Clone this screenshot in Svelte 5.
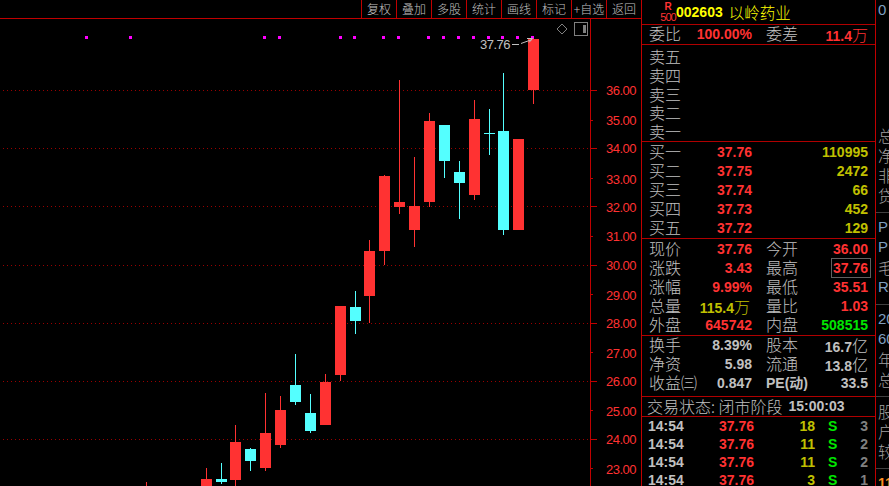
<script>
    const tools = ['复权', '叠加', '多股', '统计', '画线', '标记', '+自选', '返回'];

    const markers = [86, 130, 264, 279, 340, 354, 383, 398, 428, 443, 458, 473, 488, 502, 517, 532];
    const gridY = [90, 148, 206, 265, 323, 381, 439];
    const minorY = [120, 178, 236, 294, 352, 410, 468];
    const axis = [
        ['36.00', 90], ['35.00', 120], ['34.00', 148], ['33.00', 179], ['32.00', 207],
        ['31.00', 236], ['30.00', 265], ['29.00', 295], ['28.00', 323], ['27.00', 353],
        ['26.00', 381], ['25.00', 411], ['24.00', 439], ['23.00', 469]
    ];

    // x, up?, body top, body bottom, wick top, wick bottom
    const candles = [
        [141, true, 490, 490, 482, 490],
        [201, true, 479, 490, 468, 490],
        [216, false, 479, 482, 463, 484],
        [230, true, 442, 480, 425, 490],
        [245, false, 449, 461, 448, 471],
        [260, true, 433, 468, 393, 471],
        [275, true, 410, 445, 396, 448],
        [290, false, 385, 402, 354, 405],
        [305, false, 413, 431, 394, 433],
        [320, true, 382, 425, 374, 425],
        [335, true, 306, 375, 306, 381],
        [350, false, 307, 321, 291, 334],
        [364, true, 251, 296, 240, 323],
        [379, true, 176, 251, 175, 265],
        [394, true, 202, 207, 80, 214],
        [409, true, 206, 230, 157, 247],
        [424, true, 121, 202, 113, 207],
        [439, false, 125, 161, 125, 178],
        [454, false, 172, 183, 161, 219],
        [469, true, 119, 195, 100, 200],
        [484, false, 133, 134, 109, 155],
        [498, false, 131, 230, 73, 235],
        [513, true, 139, 230, 139, 230],
        [528, true, 39, 90, 39, 104]
    ];

    const sells = ['卖五', '卖四', '卖三', '卖二', '卖一'];
    const buys = [
        ['买一', '37.76', '110995'],
        ['买二', '37.75', '2472'],
        ['买三', '37.74', '66'],
        ['买四', '37.73', '452'],
        ['买五', '37.72', '129']
    ];
    const quote = [
        ['现价', '37.76', 'red', '今开', '36.00', 'red'],
        ['涨跌', '3.43', 'red', '最高', '37.76', 'red boxed'],
        ['涨幅', '9.99%', 'red', '最低', '35.51', 'red'],
        ['总量', '115.4万', 'olive', '量比', '1.03', 'red'],
        ['外盘', '645742', 'red', '内盘', '508515', 'green']
    ];
    const stats = [
        ['换手', '8.39%', '股本', '16.7亿'],
        ['净资', '5.98', '流通', '13.8亿'],
        ['收益㈢', '0.847', 'PE(动)', '33.5']
    ];
    const ticks = [
        ['14:54', '37.76', '18', '3'],
        ['14:54', '37.76', '11', '2'],
        ['14:54', '37.76', '11', '2'],
        ['14:54', '37.76', '3', '1']
    ];
</script>

<div class="screen">
    <div class="main">
        <div class="toolbar">
            {#each tools as t}
                <div class="tool">{t}</div>
            {/each}
        </div>
        <svg class="chart" width="641" height="467" viewBox="0 19 641 467">
            {#each gridY as y}
                <line class="dots" x1="3" x2="590" y1={y + 0.5} y2={y + 0.5} />
                <rect class="tick" x="590" {y} width="7" height="1" />
            {/each}
            {#each minorY as y}
                <rect class="tick" x="590" {y} width="3" height="1" />
            {/each}
            <rect class="tick" x="590" y="19" width="1" height="467" />

            {#each markers as x}
                <rect class="marker" x={x - 1} y="36" width="3" height="3" />
            {/each}

            {#each candles as [x, up, top, bottom, wickTop, wickBottom]}
                <g class={up ? 'up' : 'down'}>
                    <rect x={x + 5} y={wickTop} width="1" height={wickBottom - wickTop} />
                    <rect {x} y={top} width="11" height={bottom - top} />
                </g>
            {/each}

            {#each axis as [label, y]}
                <text class="axis" x="636" y={y + 5} text-anchor="end">{label}</text>
            {/each}

            <text class="last" x="480" y="49">37.76</text>
            <path class="arrow" d="M512 44.5H519M521 43.5L532 39.5M527 38.5H532.5L529 42.5" />

            <path class="outline" d="M562 24L567 29L562 34L557 29Z" />
            <rect class="outline" x="574.5" y="22.5" width="13" height="13" />
            <rect class="fill" x="583" y="25" width="3" height="8" />
        </svg>
    </div>

    <div class="panel">
        <section class="head">
            <div class="badge"><span class="r">R</span><span class="n">500</span></div>
            <span class="code">002603</span>
            <span class="name">以岭药业</span>
        </section>

        <section class="row ratio">
            <div class="pair"><span class="lb">委比</span><span class="num red">100.00%</span></div>
            <div class="pair"><span class="lb">委差</span><span class="num red">11.4<i>万</i></span></div>
        </section>

        <section class="sell">
            {#each sells as s}
                <div class="lb">{s}</div>
            {/each}
        </section>

        <section class="buy">
            {#each buys as [label, price, vol]}
                <div class="row">
                    <div class="pair"><span class="lb">{label}</span><span class="num red">{price}</span></div>
                    <div class="pair end"><span class="num olive">{vol}</span></div>
                </div>
            {/each}
        </section>

        <section class="quote">
            {#each quote as [l1, v1, c1, l2, v2, c2]}
                <div class="row">
                    <div class="pair">
                        <span class="lb">{l1}</span>
                        {#if v1.endsWith('万')}
                            <span class="num nudge {c1}">{v1.slice(0, -1)}<i>万</i></span>
                        {:else}
                            <span class="num {c1}">{v1}</span>
                        {/if}
                    </div>
                    <div class="pair"><span class="lb">{l2}</span><span class="num {c2}">{v2}</span></div>
                </div>
            {/each}
        </section>

        <section class="stats">
            {#each stats as [l1, v1, l2, v2]}
                <div class="row">
                    <div class="pair"><span class="lb">{l1}</span><span class="num">{v1}</span></div>
                    <div class="pair">
                        <span class="lb" class:mixed={l2.startsWith('PE')}>{l2}</span>
                        {#if v2.endsWith('亿')}
                            <span class="num">{v2.slice(0, -1)}<i>亿</i></span>
                        {:else}
                            <span class="num">{v2}</span>
                        {/if}
                    </div>
                </div>
            {/each}
        </section>

        <section class="status">
            <span class="lb">交易状态: 闭市阶段</span><span class="num">15:00:03</span>
        </section>

        <section class="trades">
            {#each ticks as [time, price, vol, n]}
                <div class="trade">
                    <span class="num">{time}</span>
                    <span class="num red">{price}</span>
                    <span class="num olive">{vol}</span>
                    <span class="num side">S</span>
                    <span class="num count">{n}</span>
                </div>
            {/each}
        </section>
    </div>

    <div class="strip">
        <div class="cell blue first">0</div>
        <div class="cell">总</div>
        <div class="cell">净</div>
        <div class="cell">非</div>
        <div class="cell">贷</div>
        <hr />
        <div class="cell blue">P</div>
        <div class="cell blue">P</div>
        <div class="cell">毛</div>
        <div class="cell blue">R</div>
        <hr />
        <div class="cell blue">20</div>
        <div class="cell blue">60</div>
        <div class="cell">年</div>
        <div class="cell">总</div>
        <hr />
        <div class="cell">股</div>
        <div class="cell">户</div>
        <div class="cell">较</div>
        <hr />
        <div class="cell orange">11</div>
    </div>
</div>

<style>
    :global(body) {
        background: #000;
        overflow: hidden;
    }

    .screen {
        display: flex;
        width: 889px;
        height: 486px;
        overflow: hidden;
        background: #000;
        color: #c0c0c0;
        font-family: "Noto Sans CJK SC", "Liberation Sans", sans-serif;
        font-weight: 300;
    }

    .main {
        width: 641px;
        flex: none;
    }

    .toolbar {
        display: flex;
        justify-content: flex-end;
        height: 18px;
        border-bottom: 1px solid #c00000;
    }

    .tool {
        width: 34px;
        border-left: 1px solid #c00000;
        font-size: 12px;
        line-height: 17px;
        text-align: center;
        white-space: nowrap;
    }

    .chart {
        display: block;
        shape-rendering: crispEdges;
    }

    .dots {
        stroke: #990000;
        stroke-width: 1;
        stroke-dasharray: 1 3;
    }

    .tick {
        fill: #c00000;
    }

    .marker {
        fill: #ff00ff;
    }

    .up rect {
        fill: #ff3232;
    }

    .down rect {
        fill: #54ffff;
    }

    .axis {
        fill: #ff3232;
        font: 13px "Liberation Sans", sans-serif;
        letter-spacing: -0.5px;
    }

    .last {
        fill: #c0c0c0;
        font: 13px "Liberation Sans", sans-serif;
        letter-spacing: -0.5px;
    }

    .arrow {
        fill: none;
        stroke: #c0c0c0;
        shape-rendering: auto;
    }

    .outline {
        fill: none;
        stroke: #808080;
        shape-rendering: auto;
    }

    .fill {
        fill: #808080;
    }

    .panel {
        width: 233px;
        flex: none;
        border-left: 1px solid #c00000;
        border-right: 1px solid #c00000;
    }

    section {
        box-sizing: border-box;
        border-bottom: 1px solid #b00000;
    }

    .lb {
        margin-top: -1px;
        font-size: 16px;
        line-height: 19px;
        white-space: nowrap;
    }

    .lb.mixed {
        margin-top: 0;
        font-family: "Liberation Sans", "Noto Sans CJK SC", sans-serif;
        font-weight: bold;
        font-size: 14px;
    }

    .num {
        font: bold 14px/19px "Liberation Sans", sans-serif;
        white-space: nowrap;
    }

    .num i {
        font: 300 16px/19px "Noto Sans CJK SC", sans-serif;
    }

    .red {
        color: #ff3232;
    }

    .olive {
        color: #c0c000;
    }

    .green {
        color: #00e600;
    }

    .boxed {
        height: 18px;
        outline: 1px solid #606060;
        padding: 0 2px 0 1px;
        margin-right: -2px;
    }

    .nudge {
        margin-right: 2px;
    }

    .head {
        display: flex;
        align-items: center;
        height: 25px;
        padding-left: 18px;
        color: #ffff00;
    }

    .badge {
        display: flex;
        flex-direction: column;
        align-items: center;
        width: 16px;
        color: #ff3232;
        font-family: "Liberation Sans", sans-serif;
    }

    .r {
        font: bold 10px/10px "Liberation Sans", sans-serif;
    }

    .n {
        font-size: 11px;
        font-weight: 400;
        line-height: 10px;
        letter-spacing: -1px;
    }

    .code {
        font: bold 14px/24px "Liberation Sans", sans-serif;
    }

    .name {
        margin-left: 6px;
        font-size: 15.5px;
        line-height: 22px;
    }

    .row {
        display: grid;
        grid-template-columns: 103px 102px;
        column-gap: 14px;
        height: 19px;
        padding-left: 7px;
    }

    .pair {
        display: flex;
        justify-content: space-between;
    }

    .end {
        justify-content: flex-end;
    }

    .ratio {
        box-sizing: border-box;
        height: 20px;
    }

    .sell {
        height: 97px;
        padding: 2px 0 0 7px;
    }

    .sell .lb {
        margin-top: 0;
        line-height: 18.75px;
    }

    .buy {
        height: 97px;
        padding-top: 1px;
    }

    .quote {
        height: 97px;
        padding-top: 1px;
    }

    .stats {
        height: 61px;
    }

    .status {
        display: flex;
        align-items: center;
        height: 20px;
        padding-left: 5px;
    }

    .status .num {
        margin-left: 6px;
    }

    .trades {
        border-bottom: none;
    }

    .trade {
        display: grid;
        grid-template-columns: 48px 58px 61px 21px 32px;
        height: 18px;
        padding-left: 6px;
    }

    .trade .num {
        line-height: 18px;
    }

    .trade .red,
    .trade .olive,
    .trade .count {
        text-align: right;
    }

    .side {
        color: #00e600;
        padding-left: 13px;
    }

    .count {
        color: #808080;
    }

    .strip {
        flex: 1;
        overflow: hidden;
        padding-left: 2px;
    }

    .cell {
        height: 20px;
        font-size: 16px;
        line-height: 20px;
        white-space: nowrap;
        color: #a0a0a0;
    }

    .first {
        height: 125px;
    }

    .blue {
        color: #7f9fc0;
        font-family: "Liberation Sans", sans-serif;
        font-size: 15px;
    }

    .orange {
        color: #ff9020;
        font: bold 14px/20px "Liberation Sans", sans-serif;
    }

    hr {
        height: 1px;
        margin: 7px 0 4px -2px;
        border: none;
        background: #404040;
    }
</style>
